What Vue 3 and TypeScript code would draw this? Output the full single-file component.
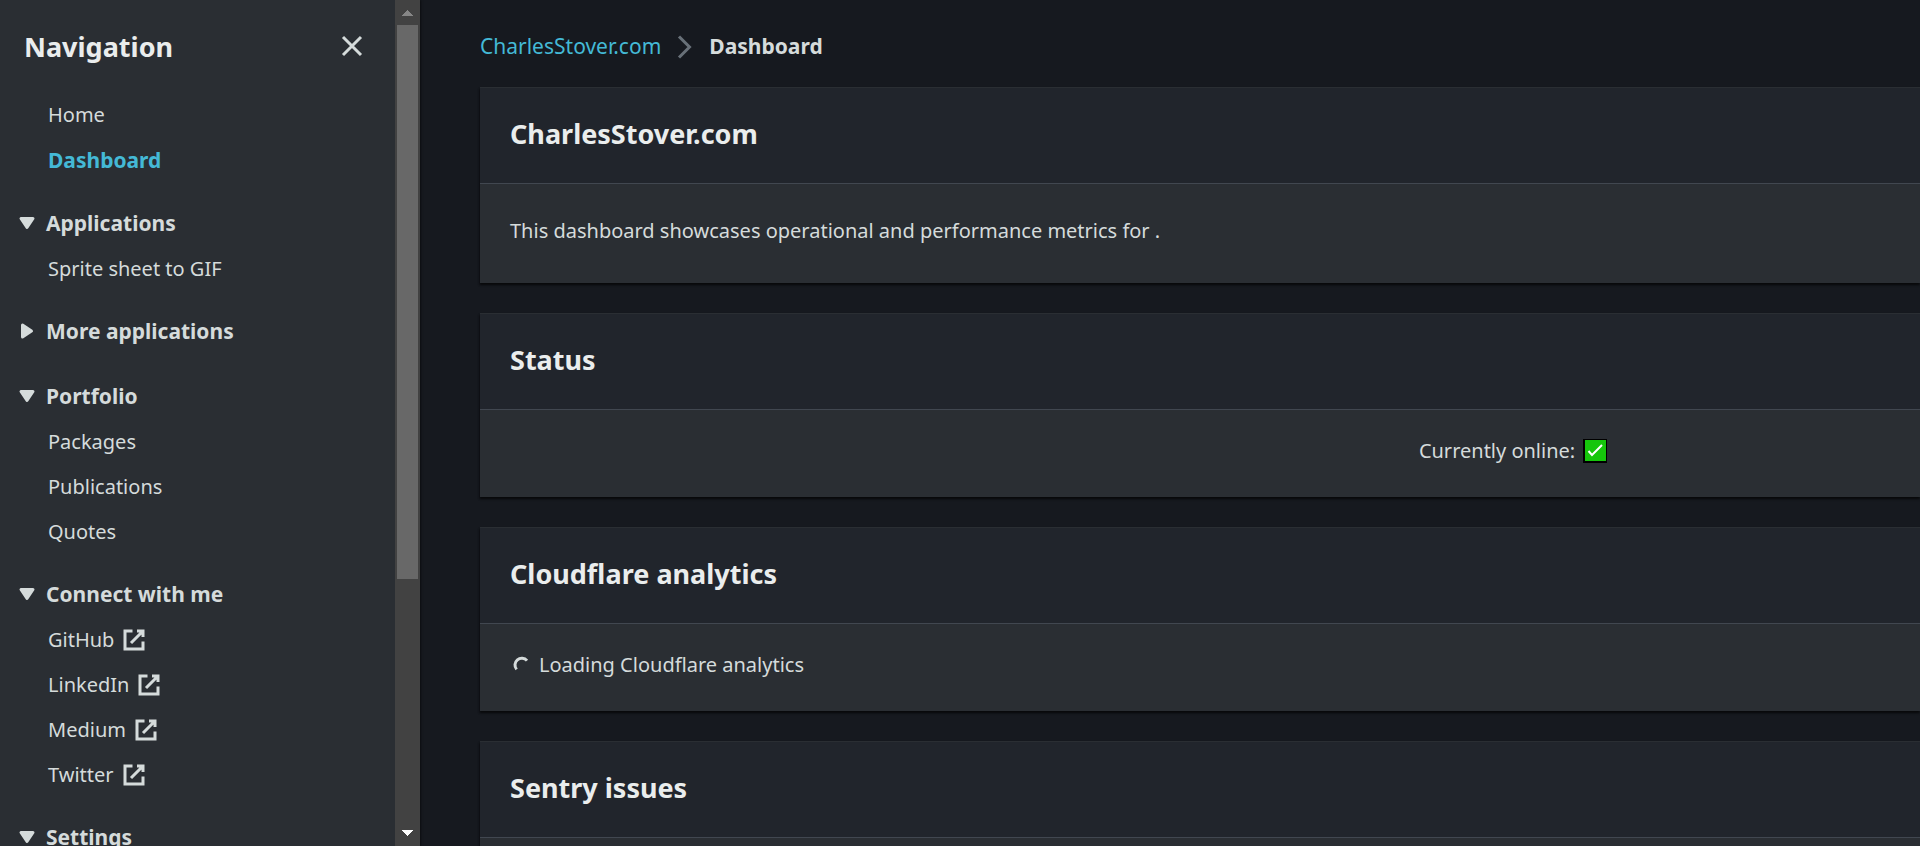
<script setup lang="ts">
import { ref } from 'vue'

interface NavLink {
  text: string
  external?: boolean
  active?: boolean
}

interface NavSection {
  title: string
  open: boolean
  links: NavLink[]
}

const mainLinks: NavLink[] = [{ text: 'Home' }, { text: 'Dashboard', active: true }]

const sections = ref<NavSection[]>([
  { title: 'Applications', open: true, links: [{ text: 'Sprite sheet to GIF' }] },
  { title: 'More applications', open: false, links: [] },
  {
    title: 'Portfolio',
    open: true,
    links: [{ text: 'Packages' }, { text: 'Publications' }, { text: 'Quotes' }],
  },
  {
    title: 'Connect with me',
    open: true,
    links: [
      { text: 'GitHub', external: true },
      { text: 'LinkedIn', external: true },
      { text: 'Medium', external: true },
      { text: 'Twitter', external: true },
    ],
  },
  { title: 'Settings', open: true, links: [] },
])
</script>

<template>
  <div class="layout">
    <aside class="drawer">
      <nav class="nav" aria-label="Navigation">
        <header class="nav-header">
          <h2>Navigation</h2>
          <button class="close" type="button" aria-label="Close navigation">
            <svg class="icon" viewBox="0 0 16 16"><path d="M2 2l12 12M14 2L2 14" /></svg>
          </button>
        </header>
        <ul class="links main-links">
          <li v-for="link in mainLinks" :key="link.text">
            <a href="#" :class="{ active: link.active }">{{ link.text }}</a>
          </li>
        </ul>
        <section
          v-for="section in sections"
          :key="section.title"
          class="section"
          :class="{ collapsed: !section.open }"
        >
          <button
            class="toggle"
            type="button"
            :aria-expanded="section.open"
            @click="section.open = !section.open"
          >
            <svg class="icon caret" viewBox="0 0 16 16">
              <path v-if="section.open" d="M4 5h8l-4 6-4-6z" />
              <path v-else d="M5 4v8l6-4-6-4z" />
            </svg>
            <span>{{ section.title }}</span>
          </button>
          <ul v-if="section.open && section.links.length" class="links">
            <li v-for="link in section.links" :key="link.text">
              <a href="#">
                <span>{{ link.text }}</span>
                <svg v-if="link.external" class="icon" viewBox="0 0 16 16">
                  <path d="M10 2h4v4M6 10l8-8M14 9.05V14H2V2h5" />
                </svg>
              </a>
            </li>
          </ul>
        </section>
      </nav>
      <div class="scrollbar" aria-hidden="true">
        <svg class="arrow up" viewBox="0 0 25 25"><path d="M12.5 10L18 16H7z" /></svg>
        <div class="track"><div class="thumb"></div></div>
        <svg class="arrow down" viewBox="0 0 25 25"><path d="M7 9h11l-5.500 6z" /></svg>
      </div>
    </aside>

    <main class="content">
      <nav class="breadcrumbs" aria-label="Breadcrumbs">
        <a href="#">CharlesStover.com</a>
        <svg class="icon chevron" viewBox="0 0 16 16"><path d="M4 1l7 7-7 7" /></svg>
        <span class="current">Dashboard</span>
      </nav>

      <section class="card">
        <h2>CharlesStover.com</h2>
        <div class="body">
          <p>This dashboard showcases operational and performance metrics for .</p>
        </div>
      </section>

      <section class="card">
        <h2>Status</h2>
        <div class="body metrics">
          <div class="metric">
            <span>Currently online:</span>
            <svg class="check" viewBox="0 0 24 24" role="img" aria-label="Yes">
              <rect class="edge" width="24" height="24" />
              <rect class="fill" x="2" y="1" width="21" height="21" />
              <path d="M5.500 12l3.500 4L19 6" />
            </svg>
          </div>
        </div>
      </section>

      <section class="card">
        <h2>Cloudflare analytics</h2>
        <div class="body">
          <div class="loading" role="status">
            <svg class="spinner" viewBox="0 0 24 24"><path d="M17 7.600A6.700 6.700 0 1 0 6.600 16.400" /></svg>
            <span>Loading Cloudflare analytics</span>
          </div>
        </div>
      </section>

      <section class="card">
        <h2>Sentry issues</h2>
        <div class="body"></div>
      </section>
    </main>
  </div>
</template>

<style>
body {
  margin: 0;
  background: #16191f;
}
</style>

<style scoped>
.layout {
  display: flex;
  height: 100vh;
  overflow: hidden;
  background: #16191f;
  color: #d5dbdb;
  font-family: 'Noto Sans', 'Open Sans', sans-serif;
  font-size: 20px;
  line-height: 33px;
}

h2 {
  margin: 0;
  color: #eaeded;
  font-size: 27px;
  font-weight: 700;
  line-height: 36px;
}

p {
  margin: 6px 0;
}

a {
  color: inherit;
  text-decoration: none;
}

button {
  padding: 0;
  border: 0;
  background: none;
  color: inherit;
  font: inherit;
  cursor: pointer;
}

.icon {
  flex: none;
  width: 24px;
  height: 24px;
  fill: none;
  stroke: currentColor;
  stroke-width: 2;
}

.drawer {
  display: flex;
  flex: none;
  width: 420px;
  background: #2a2e33;
  box-shadow: 1px 0 2px rgba(0, 0, 0, 0.5);
}

.nav {
  flex: 1;
  overflow: hidden;
}

.nav-header {
  display: flex;
  align-items: center;
  justify-content: space-between;
  padding: 29px 31px 35px 24px;
}

.close {
  display: flex;
  padding-bottom: 2px;
}

.links {
  display: flex;
  flex-direction: column;
  gap: 15px;
  margin: 0;
  padding: 0 0 0 48px;
  list-style: none;
  line-height: 30px;
}

.links a {
  display: flex;
  align-items: center;
  gap: 8px;
}

.main-links {
  margin-bottom: 32px;
}

.links .active {
  color: #44b9d6;
  font-size: 21px;
  font-weight: 700;
}

.section {
  display: flex;
  flex-direction: column;
  gap: 15px;
  margin-bottom: 31px;
}

.section.collapsed {
  margin-bottom: 33px;
}

.toggle {
  display: flex;
  align-items: center;
  gap: 7px;
  padding-left: 15px;
  font-size: 21px;
  font-weight: 700;
  line-height: 32px;
}

.caret {
  fill: currentColor;
  stroke-linejoin: round;
}

.scrollbar {
  display: flex;
  flex: none;
  flex-direction: column;
  width: 25px;
  background: #424242;
}

.arrow {
  flex: none;
  width: 25px;
  height: 25px;
  shape-rendering: crispEdges;
}

.up {
  fill: #868686;
}

.down {
  fill: #fff;
}

.track {
  display: grid;
  flex: 1;
  grid-template-rows: 16fr 7fr;
  padding: 0 2px;
}

.thumb {
  background: #686868;
}

.content {
  flex: 1;
  min-width: 0;
  padding: 30px 0 0 60px;
}

.breadcrumbs {
  display: flex;
  align-items: center;
  gap: 12px;
  margin-bottom: 24px;
  font-size: 21px;
}

.breadcrumbs a {
  color: #44b9d6;
}

.chevron {
  color: #687078;
}

.current {
  font-weight: 700;
}

.card {
  margin-bottom: 30px;
  border-top: 1px solid #2a2e33;
  background: #2a2e33;
  box-shadow:
    0 2px 2px rgba(0, 0, 0, 0.5),
    -1px 2px 2px rgba(0, 0, 0, 0.3);
}

.card h2 {
  padding: 28px 30px 31px;
  border-bottom: 1px solid #414750;
  background: #21252c;
}

.body {
  min-height: 33px;
  padding: 24px 30px 30px;
}

.metrics {
  display: grid;
  grid-template-columns: 10fr 13fr;
  padding-right: 0;
  padding-left: 0;
}

.metric {
  display: flex;
  grid-column: 2;
  align-items: center;
  justify-content: center;
  gap: 8px;
}

.check {
  width: 24px;
  height: 24px;
  fill: none;
  stroke: #fff;
  stroke-width: 2;
}

.edge {
  fill: #000;
  stroke: none;
}

.fill {
  fill: #16c60c;
  stroke: none;
}

.loading {
  display: flex;
  align-items: center;
  gap: 5px;
}

.spinner {
  width: 24px;
  height: 24px;
  fill: none;
  stroke: currentColor;
  stroke-width: 3;
}
</style>
